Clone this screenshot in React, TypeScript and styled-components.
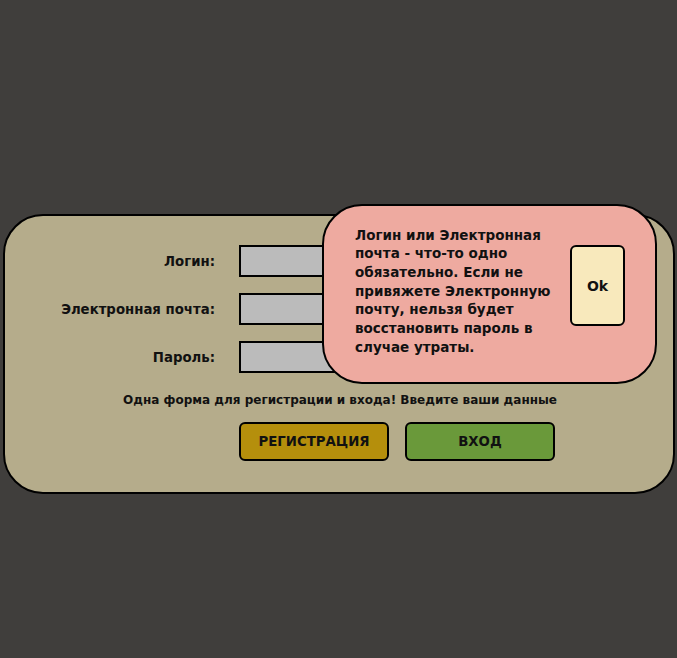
import React from "react";
import styled, { createGlobalStyle } from "styled-components";

const Global = createGlobalStyle`
  html, body { margin: 0; padding: 0; }
  body {
    background: #403e3c;
    font-family: "DejaVu Sans", "Liberation Sans", sans-serif;
    font-weight: bold;
    color: #111;
  }
`;

const Page = styled.div`
  min-height: 658px;
  box-sizing: border-box;
  padding: 214px 2px 0 3px;
`;

const Card = styled.div`
  position: relative;
  box-sizing: border-box;
  width: 672px;
  height: 280px;
  background: #b5ac8b;
  border: 2px solid #000;
  border-radius: 40px;
  padding: 29px 0 0 0;
  display: flex;
  flex-direction: column;
`;

const Rows = styled.div`
  display: grid;
  grid-template-columns: 210px 200px;
  column-gap: 24px;
  row-gap: 16px;
  align-items: center;
`;

const Label = styled.label`
  text-align: right;
  font-size: 13.3px;
`;

const Input = styled.div`
  box-sizing: border-box;
  height: 32px;
  background: #bbbbbb;
  border: 2px solid #000;
`;

const Note = styled.div`
  margin-top: 20px;
  text-align: center;
  font-size: 12px;
  padding-left: 2px;
`;

const Buttons = styled.div`
  display: flex;
  gap: 16px;
  margin-top: 15px;
  padding-left: 234px;
`;

const Button = styled.button<{ $bg: string }>`
  box-sizing: border-box;
  width: 150px;
  height: 39px;
  background: ${(p) => p.$bg};
  border: 2px solid #000;
  border-radius: 6px;
  font-family: inherit;
  font-weight: bold;
  font-size: 13.3px;
  color: #111;
`;

const Popup = styled.div`
  position: absolute;
  left: 317px;
  top: -12px;
  box-sizing: border-box;
  width: 335px;
  height: 180px;
  background: #eeaaa0;
  border: 2px solid #000;
  border-radius: 40px;
  display: flex;
  align-items: center;
  padding: 0 30px 0 31px;
  gap: 10px;
`;

const PopupText = styled.p`
  margin: 0 0 6px 0;
  flex: 1;
  font-size: 13.5px;
  line-height: 18.7px;
`;

const OkButton = styled.button`
  box-sizing: border-box;
  flex: none;
  align-self: flex-start;
  margin-top: 39px;
  width: 55px;
  height: 81px;
  background: #f8e9bc;
  border: 2px solid #000;
  border-radius: 6px;
  font-family: inherit;
  font-weight: bold;
  font-size: 14px;
  color: #111;
`;

export default function App() {
  return (
    <>
      <Global />
      <Page>
        <Card>
          <Rows>
            <Label>Логин:</Label>
            <Input />
            <Label>Электронная почта:</Label>
            <Input />
            <Label>Пароль:</Label>
            <Input />
          </Rows>
          <Note>Одна форма для регистрации и входа! Введите ваши данные</Note>
          <Buttons>
            <Button $bg="#b58f0c">РЕГИСТРАЦИЯ</Button>
            <Button $bg="#6a993a">ВХОД</Button>
          </Buttons>
          <Popup>
            <PopupText>
              Логин или Электронная почта - что-то одно обязательно. Если не
              привяжете Электронную почту, нельзя будет восстановить пароль в
              случае утраты.
            </PopupText>
            <OkButton>Ok</OkButton>
          </Popup>
        </Card>
      </Page>
    </>
  );
}
